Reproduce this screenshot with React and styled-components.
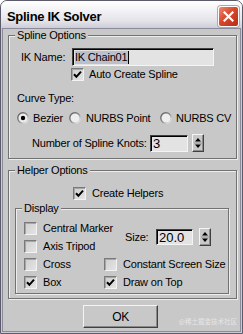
import React, { useId } from 'react';
import styled, { createGlobalStyle } from 'styled-components';

const GlobalStyle = createGlobalStyle`
  html, body { margin: 0; padding: 0; background: #ffffff; }
  #root { width: 243px; height: 334px; }
`;

const FONT = `"Liberation Sans", Arial, sans-serif`;
const BG = '#c8c8c8';

const Window = styled.div`
  position: relative;
  width: 243px;
  height: 334px;
  box-sizing: border-box;
  border: 1px solid #5b5b6c;
  border-radius: 7px 7px 0 0;
  background: #cacad6;
  display: flex;
  flex-direction: column;
  overflow: hidden;
  font-family: ${FONT};
  font-size: 11px;
  color: #000;
`;

const TitleBar = styled.div`
  height: 27px;
  flex: none;
  display: flex;
  align-items: flex-start;
  justify-content: space-between;
  padding: 0 3px 0 6px;
  background: linear-gradient(#ffffff 0%, #f3f3f6 35%, #e2e2e8 75%, #cdcdd7 100%);
`;

const Title = styled.div`
  margin-top: 7px;
  font-size: 13px;
  font-weight: bold;
  letter-spacing: -0.3px;
  line-height: 17px;
`;

const CloseButton = styled.div`
  margin-top: 5px;
  width: 21px;
  height: 21px;
  box-sizing: border-box;
  border: 1px solid #ffffff;
  border-radius: 3px;
  background: linear-gradient(135deg, #ee8c74 0%, #d8482c 45%, #b82c16 100%);
  box-shadow: 0 0 0 1px #b9a2a2;
  display: flex;
  align-items: center;
  justify-content: center;
`;

const Body = styled.div`
  position: relative;
  flex: 1;
  margin: 0 1px 1px 1px;
  border: 1px solid #8b8b9b;
  background: ${BG};
  padding: 6px 3px 3px 5px;
  display: flex;
  flex-direction: column;
  align-items: flex-start;
`;

const Group = styled.div`
  position: relative;
  flex: none;
  box-sizing: border-box;
  width: ${(p) => p.$w}px;
  height: ${(p) => p.$h}px;
  margin-top: ${(p) => p.$mt || 0}px;
  margin-left: ${(p) => p.$ml || 0}px;
  border: 1px solid #727272;
  box-shadow: 1px 1px 0 #ededed, inset 1px 1px 0 #ededed;
  display: flex;
  flex-direction: column;
  align-items: flex-start;
`;

const Legend = styled.span`
  position: absolute;
  top: -7px;
  left: 6px;
  padding: 0 2px;
  background: ${BG};
  line-height: 13px;
  letter-spacing: -0.2px;
  white-space: nowrap;
`;

const Row = styled.div`
  display: flex;
  align-items: center;
  flex: none;
  height: ${(p) => p.$h || 16}px;
  margin-top: ${(p) => p.$mt || 0}px;
  padding-left: ${(p) => p.$pl || 0}px;
`;

const Label = styled.span`
  flex: none;
  width: ${(p) => (p.$w ? `${p.$w}px` : 'auto')};
  white-space: nowrap;
  letter-spacing: -0.2px;
  line-height: 13px;
`;

const TextField = styled.div`
  flex: none;
  box-sizing: border-box;
  width: ${(p) => p.$w}px;
  height: ${(p) => p.$h}px;
  background: #e3e3e3;
  border: 1px solid;
  border-color: #404040 #f4f4f4 #f4f4f4 #404040;
  box-shadow: inset 1px 1px 0 #000;
  display: flex;
  align-items: center;
  padding-left: 2px;
  font-size: ${(p) => p.$fs || 11}px;
  letter-spacing: ${(p) => (p.$fs ? '0' : '-0.2px')};
  white-space: nowrap;
  overflow: hidden;
`;

const Selected = styled.span`
  background: #bcc0cc;
  border-right: 1px solid #000;
  padding-right: 1px;
  line-height: 13px;
`;

const Box = styled.span`
  flex: none;
  box-sizing: border-box;
  width: 13px;
  height: 13px;
  border: 1px solid;
  border-color: #7a7a7a #f2f2f2 #f2f2f2 #7a7a7a;
  box-shadow: inset 1px 1px 0 #a6a6a6;
  background: linear-gradient(135deg, #cfcfcf, #e4e4e4);
  display: flex;
  align-items: center;
  justify-content: center;
`;

const Item = styled.div`
  display: flex;
  align-items: center;
  gap: ${(p) => p.$gap || 5}px;
  flex: none;
  width: ${(p) => (p.$w ? `${p.$w}px` : 'auto')};
`;

const SpinBox = styled.div`
  flex: none;
  box-sizing: border-box;
  width: 12px;
  height: 18px;
  margin-left: ${(p) => p.$ml || 0}px;
  border: 1px solid;
  border-color: #f4f4f4 #404040 #404040 #f4f4f4;
  box-shadow: inset -1px -1px 0 #8c8c8c;
  background: ${BG};
  display: flex;
`;

const DisplayGrid = styled.div`
  display: grid;
  grid-template-columns: 80px auto;
  grid-template-rows: repeat(4, 18px);
  margin-top: 10px;
  padding-left: 8px;
`;

const Cell = styled.div`
  grid-column: ${(p) => p.$col};
  grid-row: ${(p) => p.$row};
  display: flex;
  align-items: center;
  padding-left: ${(p) => p.$pl || 0}px;
`;

const OkButton = styled.div`
  flex: none;
  box-sizing: border-box;
  width: 75px;
  height: 23px;
  margin-top: 6px;
  margin-left: 75px;
  border: 1px solid;
  border-color: #f4f4f4 #404040 #404040 #f4f4f4;
  box-shadow: inset -1px -1px 0 #8a8a8a;
  display: flex;
  align-items: center;
  justify-content: center;
  font-size: 12px;
  letter-spacing: -0.3px;
`;

const Watermark = styled.span`
  position: absolute;
  right: 3px;
  bottom: 6px;
  font-family: "Noto Sans CJK SC", sans-serif;
  font-size: 6.5px;
  line-height: 8px;
  color: #e6e6e6;
  white-space: nowrap;
`;

function CheckBox({ checked }) {
  return (
    <Box>
      {checked && (
        <svg width="9" height="9" viewBox="0 0 9 9">
          <path d="M1 4.2 L3.4 6.8 L8 1.6" fill="none" stroke="#000" strokeWidth="2" />
        </svg>
      )}
    </Box>
  );
}

function Check({ checked, children, gap }) {
  return (
    <Item $gap={gap}>
      <CheckBox checked={checked} />
      <Label>{children}</Label>
    </Item>
  );
}

function Radio({ selected }) {
  const id = useId().replace(/:/g, '');
  return (
    <svg width="12" height="12" viewBox="0 0 12 12" style={{ flex: 'none' }}>
      <defs>
        <linearGradient id={`rg${id}`} x1="0" y1="0" x2="1" y2="1">
          <stop offset="0" stopColor="#5a5a5a" />
          <stop offset="0.5" stopColor="#8a8a8a" />
          <stop offset="1" stopColor="#ffffff" />
        </linearGradient>
      </defs>
      <circle cx="6" cy="6" r="5.2" fill="#eeeeee" stroke={`url(#rg${id})`} strokeWidth="1.4" />
      {selected && <circle cx="6" cy="6" r="2.2" fill="#000" />}
    </svg>
  );
}

function Spinner({ ml }) {
  return (
    <SpinBox $ml={ml}>
      <svg width="10" height="16" viewBox="0 0 10 16">
        <polygon points="5,3 2,6.5 8,6.5" fill="#000" />
        <line x1="1" y1="8" x2="9" y2="8" stroke="#8c8c8c" strokeWidth="0.8" />
        <polygon points="2,9.5 8,9.5 5,13" fill="#000" />
      </svg>
    </SpinBox>
  );
}

export default function App() {
  return (
    <>
      <GlobalStyle />
      <Window>
        <TitleBar>
          <Title>Spline IK Solver</Title>
          <CloseButton>
            <svg width="11" height="11" viewBox="0 0 11 11">
              <path d="M1.5 1.5 L9.5 9.5 M9.5 1.5 L1.5 9.5" stroke="#fff" strokeWidth="2.2" strokeLinecap="square" />
            </svg>
          </CloseButton>
        </TitleBar>
        <Body>
          <Group $w={229} $h={124}>
            <Legend>Spline Options</Legend>
            <Row $h={18} $mt={12} $pl={12}>
              <Label $w={51}>IK Name:</Label>
              <TextField $w={142} $h={18}>
                <Selected>IK Chain01</Selected>
              </TextField>
            </Row>
            <Row $h={16} $pl={62}>
              <Check checked>Auto Create Spline</Check>
            </Row>
            <Row $h={16} $mt={8} $pl={8}>
              <Label>Curve Type:</Label>
            </Row>
            <Row $h={16} $mt={4} $pl={8}>
              <Item $w={52} $gap={4}>
                <Radio selected />
                <Label>Bezier</Label>
              </Item>
              <Item $w={91} $gap={5}>
                <Radio />
                <Label>NURBS Point</Label>
              </Item>
              <Item $gap={4}>
                <Radio />
                <Label>NURBS CV</Label>
              </Item>
            </Row>
            <Row $h={18} $mt={8} $pl={23}>
              <Label $w={118}>Number of Spline Knots:</Label>
              <TextField $w={38} $h={17} $fs={13}>3</TextField>
              <Spinner ml={4} />
            </Row>
          </Group>

          <Group $w={229} $h={129} $mt={11}>
            <Legend>Helper Options</Legend>
            <Row $h={16} $mt={14} $pl={64}>
              <Check checked gap={6}>Create Helpers</Check>
            </Row>
            <Group $w={214} $h={86} $mt={7} $ml={6}>
              <Legend>Display</Legend>
              <DisplayGrid>
                <Cell $col={1} $row={1}>
                  <Check gap={6}>Central Marker</Check>
                </Cell>
                <Cell $col={1} $row={2}>
                  <Check gap={6}>Axis Tripod</Check>
                </Cell>
                <Cell $col={1} $row={3}>
                  <Check gap={6}>Cross</Check>
                </Cell>
                <Cell $col={1} $row={4}>
                  <Check checked gap={6}>Box</Check>
                </Cell>
                <Cell $col={2} $row="1 / span 2" $pl={21}>
                  <Label $w={31}>Size:</Label>
                  <TextField $w={37} $h={16} $fs={13}>20.0</TextField>
                  <Spinner ml={6} />
                </Cell>
                <Cell $col={2} $row={3}>
                  <Check gap={6}>Constant Screen Size</Check>
                </Cell>
                <Cell $col={2} $row={4}>
                  <Check checked gap={6}>Draw on Top</Check>
                </Cell>
              </DisplayGrid>
            </Group>
          </Group>

          <OkButton>OK</OkButton>
          <Watermark>@稀土掘金技术社区</Watermark>
        </Body>
      </Window>
    </>
  );
}
